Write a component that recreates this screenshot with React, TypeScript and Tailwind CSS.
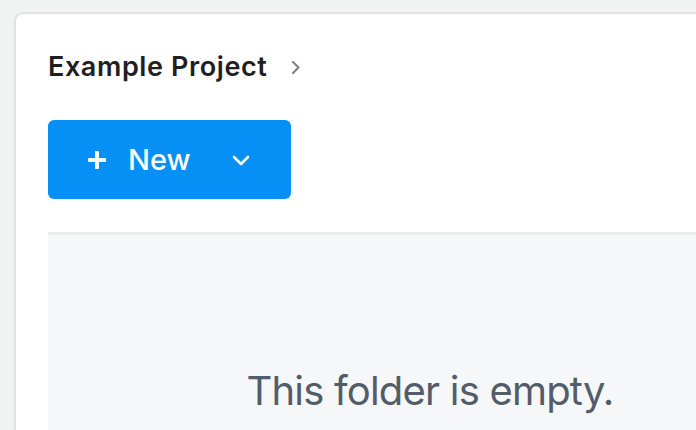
export default function App() {
  return (
    <div
      className="w-[696px] h-[430px] overflow-hidden bg-[#f1f2f2] pt-[12px] pl-[14px]"
      style={{ fontFamily: 'Inter, "Noto Sans", sans-serif' }}
    >
      <div className="w-[850px] h-[500px] bg-white border-2 border-[#e1e3e3] rounded-tl-[9px] pt-[37px] pl-[32px]">
        <div className="flex items-center h-[32px]">
          <h1 className="text-[27px] leading-[32px] font-semibold text-[#1f1f1f] tracking-[0.6px]">
            Example Project
          </h1>
          <svg className="ml-[24px] mt-[1px]" width="10" height="15" viewBox="0 0 10 15" fill="none">
            <polyline points="2,2 7.5,7.5 2,13" stroke="#858585" strokeWidth="2.2" strokeLinecap="round" strokeLinejoin="round" />
          </svg>
        </div>

        <button className="mt-[37px] w-[243px] h-[79px] flex items-center rounded-[6px] bg-[#0690f5] text-white pl-[40px]">
          <svg width="18" height="18" viewBox="0 0 18 18">
            <rect x="7" y="0" width="4" height="18" rx="0.8" fill="white" />
            <rect x="0" y="7" width="18" height="4" rx="0.8" fill="white" />
          </svg>
          <span className="ml-[22px] text-[29px] leading-none font-medium">New</span>
          <svg className="ml-[41px] mt-[2px]" width="18" height="11" viewBox="0 0 18 11" fill="none">
            <polyline points="2,2 9,9 16,2" stroke="white" strokeWidth="2.6" strokeLinecap="round" strokeLinejoin="round" />
          </svg>
        </button>

        <div className="mt-[33px] w-[764px] h-[300px] bg-[#f6f7f9] border-t-[3px] border-[#ebeded] pt-[132px] flex justify-center">
          <p className="text-[40px] leading-[48px] text-[#535c69] tracking-[-0.8px]">This folder is empty.</p>
        </div>
      </div>
    </div>
  );
}
